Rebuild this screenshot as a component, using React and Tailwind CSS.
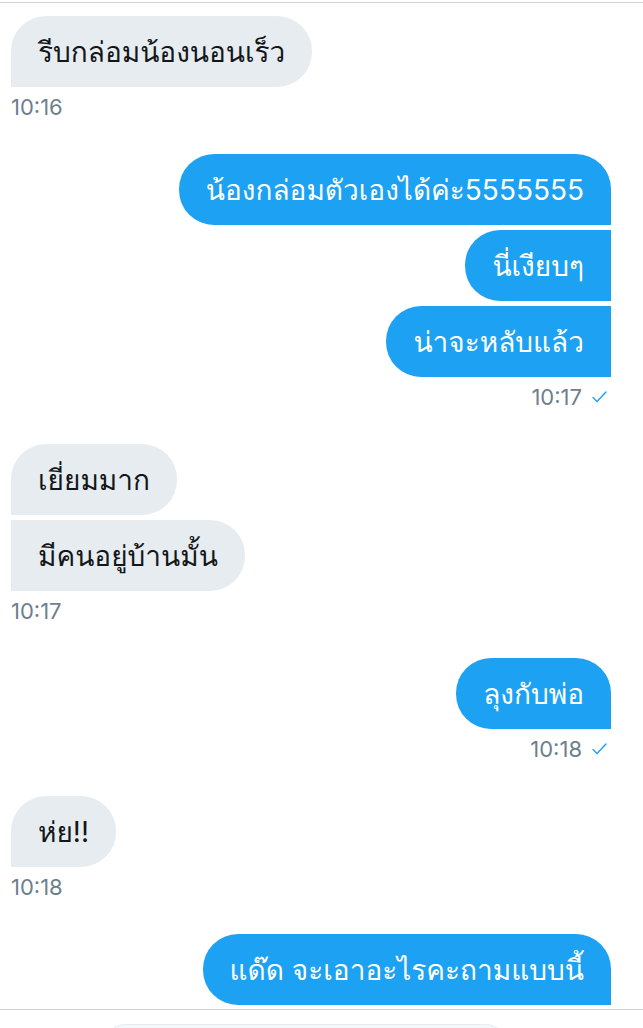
const groups = [
  { side: 'in', time: '10:16', msgs: ['รีบกล่อมน้องนอนเร็ว'] },
  { side: 'out', time: '10:17', msgs: ['น้องกล่อมตัวเองได้ค่ะ5555555', 'นี่เงียบๆ', 'น่าจะหลับแล้ว'] },
  { side: 'in', time: '10:17', msgs: ['เยี่ยมมาก', 'มีคนอยู่บ้านมั้น'] },
  { side: 'out', time: '10:18', msgs: ['ลุงกับพ่อ'] },
  { side: 'in', time: '10:18', msgs: ['ห่ย!!'] },
  { side: 'out', time: null, msgs: ['แด๊ด จะเอาอะไรคะถามแบบนี้'] },
];

function Check() {
  return (
    <svg width="15" height="12" viewBox="0 0 15 12" fill="none" className="ml-[10px]">
      <path d="M1 6.5 L5 10.5 L14 1" stroke="#1da1f2" strokeWidth="1.4" strokeLinecap="round" strokeLinejoin="round" />
    </svg>
  );
}

function Bubble({ side, text, first }) {
  const base = 'h-[71px] flex items-center px-[27px] text-[28px] rounded-[35px] whitespace-nowrap';
  if (side === 'in') {
    return (
      <div className={`${base} bg-[#e6ecf0] text-[#14171a] rounded-bl-none ${first ? '' : 'rounded-tl-none'}`}>
        {text}
      </div>
    );
  }
  return (
    <div className={`${base} bg-[#1da1f2] text-white rounded-br-none ${first ? '' : 'rounded-tr-none'}`}>
      {text}
    </div>
  );
}

export default function App() {
  return (
    <div className="w-[643px] h-[1028px] overflow-hidden bg-white pt-[2px]" style={{ fontFamily: 'Inter, Waree, Loma, Garuda, "Noto Sans Thai Looped", "Noto Sans Thai", sans-serif' }}>
      <div className="border-t border-[#ccd6dd] pl-[11px] pr-[32px] pt-[13px]">
        {groups.map((g, gi) => (
          <div key={gi} className={`flex flex-col gap-[5px] ${g.side === 'in' ? 'items-start' : 'items-end'} ${g.time ? 'mb-[37px]' : ''}`}>
            {g.msgs.map((m, i) => (
              <Bubble key={i} side={g.side} text={m} first={i === 0} />
            ))}
            {g.time && (
              <div className={`mt-[5px] h-[20px] flex items-center text-[22px] text-[#6e7f8d] ${g.side === 'out' ? 'pr-[4px]' : ''}`}>
                <span>{g.time}</span>
                {g.side === 'out' && <Check />}
              </div>
            )}
          </div>
        ))}
      </div>
      <div className="mt-[4px] border-t border-[#ccd6dd] pt-[14px] flex">
        <div className="ml-[105px] w-[401px] h-[40px] rounded-[20px] bg-[#f5f8fa] border border-[#e6ecf0]" />
      </div>
    </div>
  );
}
